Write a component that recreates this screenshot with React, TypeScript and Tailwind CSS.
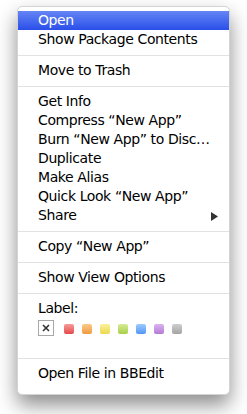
import React from 'react';

type Entry = { label: string; highlighted?: boolean; submenu?: boolean };

const groups: Entry[][] = [
    [{ label: 'Open', highlighted: true }, { label: 'Show Package Contents' }],
    [{ label: 'Move to Trash' }],
    [
        { label: 'Get Info' },
        { label: 'Compress \u201CNew App\u201D' },
        { label: 'Burn \u201CNew App\u201D to Disc\u2026' },
        { label: 'Duplicate' },
        { label: 'Make Alias' },
        { label: 'Quick Look \u201CNew App\u201D' },
        { label: 'Share', submenu: true },
    ],
    [{ label: 'Copy \u201CNew App\u201D' }],
    [{ label: 'Show View Options' }],
];

const swatches = [
    'from-[#f79a9a] to-[#e4474a]',
    'from-[#fbc98a] to-[#f09a3c]',
    'from-[#fbf19a] to-[#ecd84a]',
    'from-[#d6ec93] to-[#a8cf46]',
    'from-[#9fcbff] to-[#4f96f4]',
    'from-[#dcb3ee] to-[#b47ad6]',
    'from-[#cfcfcf] to-[#a4a4a4]',
];

const MenuRow: React.FC<{ entry: Entry }> = ({ entry }) => (
    <div
        className={`flex h-[19px] items-center justify-between pl-[20px] pr-[11px] ${
            entry.highlighted ? 'bg-gradient-to-b from-[#6584f4] to-[#2b4de9] text-white' : 'text-black'
        }`}
    >
        <span className="whitespace-nowrap">{entry.label}</span>
        {entry.submenu && (
            <svg width="7" height="9" viewBox="0 0 7 9" className="mt-[2px]">
                <path d="M0 0 L7 4.5 L0 9 Z" fill="#333" />
            </svg>
        )}
    </div>
);

const Separator = () => (
    <div className="flex h-[12px] items-center">
        <div className="h-px w-full bg-[#e2e2e2]" />
    </div>
);

export default function App() {
    return (
        <div className="h-[414px] w-[247px] bg-white pl-[17px] pt-[6px]">
            <div
                className="w-[213px] overflow-hidden rounded-[5px] border border-[#d4d4d4] bg-white pb-[11px] pt-[4px] text-[14px] leading-[19px] tracking-[-0.4px] shadow-[0_10px_20px_rgba(0,0,0,0.45)]"
                style={{ fontFamily: '"DejaVu Sans", "Lucida Grande", sans-serif' }}
            >
                {groups.map((group, gi) => (
                    <React.Fragment key={gi}>
                        {gi > 0 && <Separator />}
                        {group.map((entry) => (
                            <MenuRow key={entry.label} entry={entry} />
                        ))}
                    </React.Fragment>
                ))}
                <Separator />
                <div className="pl-[20px]">Label:</div>
                <div className="flex h-[34px] items-start pl-[20px] pt-[2px]">
                    <div className="flex h-[16px] w-[16px] items-center justify-center border border-[#a8a8a8] bg-white">
                        <svg width="8" height="8" viewBox="0 0 8 8">
                            <path d="M1 1 L7 7 M7 1 L1 7" stroke="#333" strokeWidth="1.6" />
                        </svg>
                    </div>
                    <div className="ml-[10px] mt-[4px] flex gap-[8px]">
                        {swatches.map((s) => (
                            <div key={s} className={`h-[10px] w-[10px] rounded-[2px] bg-gradient-to-b ${s}`} />
                        ))}
                    </div>
                </div>
                <Separator />
                <MenuRow entry={{ label: 'Open File in BBEdit' }} />
            </div>
        </div>
    );
}
